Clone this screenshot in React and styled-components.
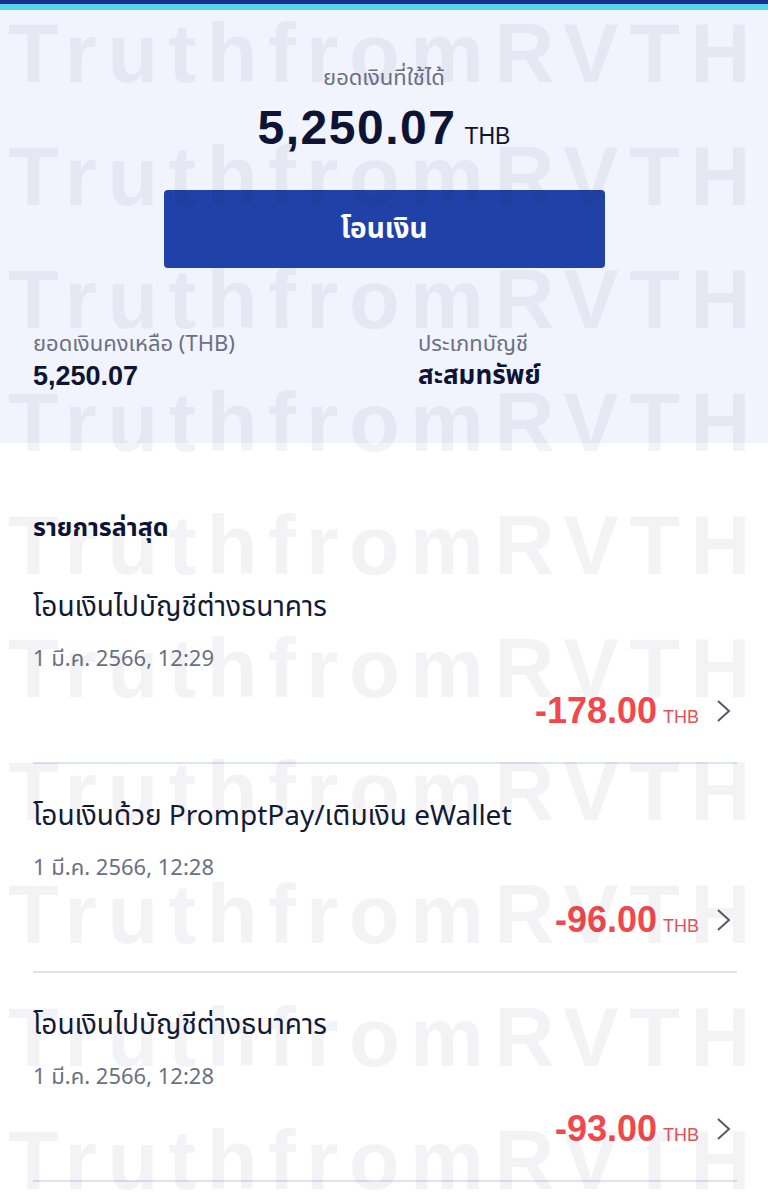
import React from "react"
import styled, { createGlobalStyle } from "styled-components"

const GlobalStyle = createGlobalStyle`
  html, body {
    margin: 0;
    padding: 0;
    background: #ffffff;
  }
  body {
    font-family: "Noto Sans Thai", "Noto Sans", "Liberation Sans", sans-serif;
    color: #101735;
  }
`

const Page = styled.div`
  position: relative;
  width: 768px;
  height: 1200px;
  overflow: hidden;
  background: #ffffff;
`

const TopBar = styled.div`
  height: 4px;
  background: #1b2f8f;
  border-bottom: 6px solid #58d6e8;
`

const Summary = styled.section`
  background: #f1f3fd;
  height: 433px;
  box-sizing: border-box;
  padding: 54px 33px 0;
  display: flex;
  flex-direction: column;
  align-items: center;
`

const AvailableLabel = styled.div`
  font-size: 22px;
  line-height: 30px;
  color: #6c7083;
`

const Balance = styled.div`
  display: flex;
  align-items: baseline;
  gap: 8px;
  margin-top: 6px;
  line-height: 56px;
`

const BalanceValue = styled.span`
  font-family: "Liberation Sans", Arial, sans-serif;
  font-weight: 700;
  font-size: 48px;
  letter-spacing: 1.5px;
  color: #0e1434;
`

const Currency = styled.span`
  font-family: "Liberation Sans", Arial, sans-serif;
  font-size: ${p => p.size || 22}px;
  color: ${p => p.color || "#0e1434"};
`

const TransferButton = styled.button`
  margin-top: 26px;
  width: 441px;
  height: 78px;
  border: none;
  border-radius: 4px;
  background: #2041a7;
  color: #ffffff;
  font-family: inherit;
  font-size: 28px;
  font-weight: 700;
  cursor: pointer;
`

const InfoGrid = styled.div`
  align-self: stretch;
  display: grid;
  grid-template-columns: 385px 1fr;
  margin-top: 63px;
`

const InfoLabel = styled.div`
  font-size: 22px;
  line-height: 28px;
  color: #6c7083;
`

const InfoValue = styled.div`
  font-family: ${p => (p.numeric ? `"Liberation Sans", Arial, sans-serif` : "inherit")};
  font-size: ${p => (p.numeric ? 27 : 26)}px;
  line-height: 34px;
  font-weight: 700;
  color: #0e1434;
`

const List = styled.section`
  padding: 68px 31px 0 33px;
`

const ListHeading = styled.h2`
  margin: 0 0 45px;
  font-size: 25px;
  line-height: 34px;
  font-weight: 700;
  color: #0e1434;
`

const Item = styled.div`
  display: flex;
  flex-direction: column;
  padding: 0 0 27px;
  border-bottom: 2px solid #dfe2f2;
  & + & {
    padding-top: 35px;
  }
`

const ItemTitle = styled.div`
  font-size: 28px;
  line-height: 36px;
  color: #121a36;
`

const ItemDate = styled.div`
  margin-top: 20px;
  font-size: 22px;
  line-height: 28px;
  color: #6c7083;
`

const AmountRow = styled.div`
  display: flex;
  align-items: center;
  justify-content: flex-end;
  gap: 6px;
  margin-top: 13px;
  height: 48px;
`

const Amount = styled.span`
  display: flex;
  align-items: baseline;
  gap: 6px;
`

const AmountValue = styled.span`
  font-family: "Liberation Sans", Arial, sans-serif;
  font-weight: 700;
  font-size: 36px;
  color: #f0484d;
`

const Chevron = styled.svg`
  width: 22px;
  height: 24px;
  margin-left: 8px;
  margin-right: 2px;
`

const Watermark = styled.div`
  position: absolute;
  inset: 0;
  pointer-events: none;
  display: flex;
  flex-direction: column;
  gap: 40px;
  padding: 12px 0 0 8px;
`

const WatermarkRow = styled.div`
  font-family: "Liberation Sans", Arial, sans-serif;
  font-weight: 700;
  font-size: 83px;
  line-height: 83px;
  letter-spacing: 10.5px;
  white-space: nowrap;
  color: rgba(40, 40, 70, 0.055);
`

const transactions = [
  { title: "โอนเงินไปบัญชีต่างธนาคาร", date: "1 มี.ค. 2566, 12:29", amount: "-178.00" },
  { title: "โอนเงินด้วย PromptPay/เติมเงิน eWallet", date: "1 มี.ค. 2566, 12:28", amount: "-96.00" },
  { title: "โอนเงินไปบัญชีต่างธนาคาร", date: "1 มี.ค. 2566, 12:28", amount: "-93.00" },
]

const ChevronIcon = () => (
  <Chevron viewBox="0 0 22 24">
    <path d="M5 2 L16 12 L5 22" fill="none" stroke="#555a66" strokeWidth="2" />
  </Chevron>
)

const App = () => (
  <Page>
    <GlobalStyle />
    <TopBar />
    <Summary>
      <AvailableLabel>ยอดเงินที่ใช้ได้</AvailableLabel>
      <Balance>
        <BalanceValue>5,250.07</BalanceValue>
        <Currency size={23}>THB</Currency>
      </Balance>
      <TransferButton>โอนเงิน</TransferButton>
      <InfoGrid>
        <div>
          <InfoLabel>ยอดเงินคงเหลือ (THB)</InfoLabel>
          <InfoValue numeric>5,250.07</InfoValue>
        </div>
        <div>
          <InfoLabel>ประเภทบัญชี</InfoLabel>
          <InfoValue>สะสมทรัพย์</InfoValue>
        </div>
      </InfoGrid>
    </Summary>
    <List>
      <ListHeading>รายการล่าสุด</ListHeading>
      {transactions.map((t, i) => (
        <Item key={i}>
          <ItemTitle>{t.title}</ItemTitle>
          <ItemDate>{t.date}</ItemDate>
          <AmountRow>
            <Amount>
              <AmountValue>{t.amount}</AmountValue>
              <Currency size={18} color="#e5515a">THB</Currency>
            </Amount>
            <ChevronIcon />
          </AmountRow>
        </Item>
      ))}
    </List>
    <Watermark>
      {Array.from({ length: 10 }).map((_, i) => (
        <WatermarkRow key={i}>TruthfromRVTH</WatermarkRow>
      ))}
    </Watermark>
  </Page>
)

export default App
